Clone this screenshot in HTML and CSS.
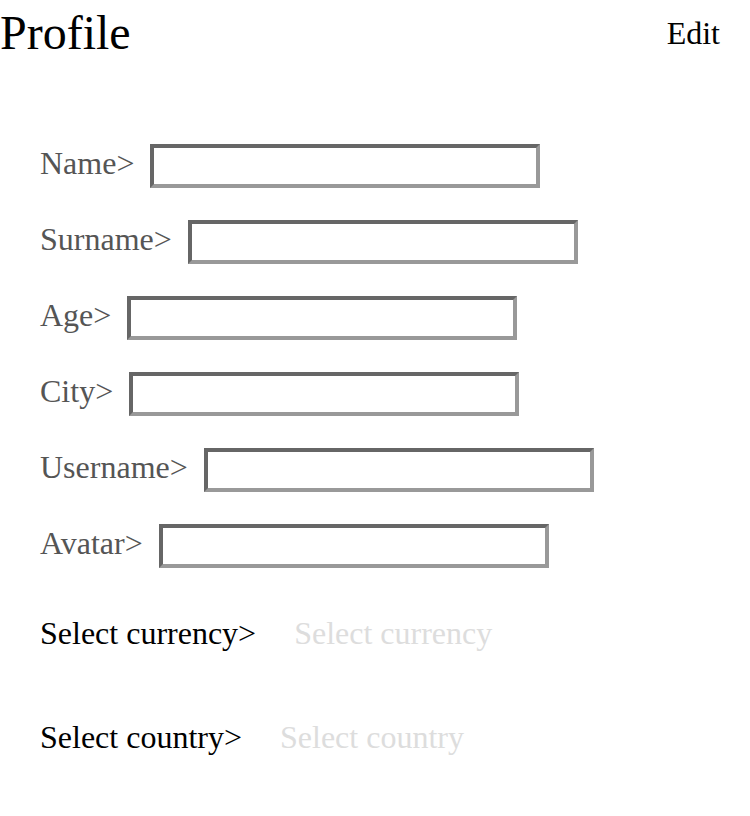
FILE: index.html
```html
<!DOCTYPE html>
<html>
<head>
<meta charset="utf-8">
<link rel="stylesheet" href="styles.css">
</head>
<body>
<header class="header">
  <h1 class="title">Profile</h1>
  <span class="edit">Edit</span>
</header>
<form class="form">
  <div class="row"><label class="label">Name&gt;</label><input class="field" type="text"></div>
  <div class="row"><label class="label">Surname&gt;</label><input class="field" type="text"></div>
  <div class="row"><label class="label">Age&gt;</label><input class="field" type="text"></div>
  <div class="row"><label class="label">City&gt;</label><input class="field" type="text"></div>
  <div class="row"><label class="label">Username&gt;</label><input class="field" type="text"></div>
  <div class="row"><label class="label">Avatar&gt;</label><input class="field" type="text"></div>
  <div class="select-row currency"><span class="select-label">Select currency&gt;</span><span class="placeholder">Select currency</span></div>
  <div class="select-row country"><span class="select-label">Select country&gt;</span><span class="placeholder">Select country</span></div>
</form>
</body>
</html>
```
FILE: styles.css
```css
html, body {
  margin: 0;
  padding: 0;
  background: #fff;
  font-family: "Liberation Serif", serif;
}
.header {
  display: flex;
  justify-content: space-between;
  align-items: flex-start;
  padding-right: 30px;
}
.title {
  margin: 0;
  font-size: 48px;
  font-weight: normal;
  line-height: 66px;
  color: #000;
}
.edit {
  font-size: 32px;
  line-height: 66px;
  color: #000;
}
.form {
  display: flex;
  flex-direction: column;
  padding: 78px 0 0 40px;
}
.row {
  display: flex;
  align-items: center;
  gap: 16px;
  margin-bottom: 32px;
}
.label {
  font-size: 32px;
  color: #555;
  line-height: 38px;
  margin-top: -6px;
}
.field {
  box-sizing: border-box;
  width: 390px;
  height: 44px;
  margin: 0;
  padding: 0;
  border: 4px solid;
  border-color: #666 #999 #999 #666;
  background: #fff;
}
.select-row {
  display: flex;
  gap: 38px;
  font-size: 32px;
  line-height: 40px;
}
.currency { margin-top: 13px; }
.country { margin-top: 64px; }
.select-label { color: #000; }
.placeholder { color: #ddd; }
```
